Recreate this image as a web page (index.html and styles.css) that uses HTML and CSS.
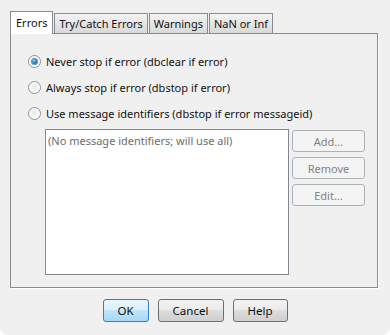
FILE: index.html
```html
<!DOCTYPE html>
<html>
<head>
<meta charset="utf-8">
<link rel="stylesheet" href="styles.css">
</head>
<body>
<div class="window">
  <div class="tabs">
    <div class="tab tab-active">Errors</div>
    <div class="tab">Try/Catch Errors</div>
    <div class="tab">Warnings</div>
    <div class="tab">NaN or Inf</div>
  </div>
  <div class="panel">
    <label class="radio-row"><span class="radio radio-on"></span><span class="label">Never stop if error (dbclear if error)</span></label>
    <label class="radio-row"><span class="radio"></span><span class="label">Always stop if error (dbstop if error)</span></label>
    <label class="radio-row"><span class="radio"></span><span class="label">Use message identifiers (dbstop if error messageid)</span></label>
    <div class="ids">
      <div class="listbox"><span class="placeholder">(No message identifiers; will use all)</span></div>
      <div class="side-buttons">
        <div class="btn btn-disabled">Add...</div>
        <div class="btn btn-disabled">Remove</div>
        <div class="btn btn-disabled">Edit...</div>
      </div>
    </div>
  </div>
  <div class="footer">
    <div class="btn btn-default btn-ok">OK</div>
    <div class="btn btn-cancel">Cancel</div>
    <div class="btn btn-help">Help</div>
  </div>
</div>
</body>
</html>
```

FILE: styles.css
```css
html, body {
  margin: 0;
  padding: 0;
  background: #ffffff;
}
body {
  font-family: "Noto Sans", "Open Sans", sans-serif;
  font-size: 11px;
  color: #111111;
}
.window {
  width: 390px;
  height: 335px;
  box-sizing: border-box;
  background: #f0f0f0;
  border-radius: 0 0 8px 8px;
  padding: 11px 12px 0 10px;
  display: flex;
  flex-direction: column;
}
.tabs {
  display: flex;
  align-items: flex-end;
  height: 22px;
  position: relative;
  z-index: 1;
}
.tab {
  box-sizing: border-box;
  height: 20px;
  padding: 0 4px;
  border: 1px solid #898c95;
  border-bottom: none;
  background: linear-gradient(#f3f3f3, #e6e6e6 50%, #d9d9d9);
  line-height: 19px;
  margin-right: 1px;
  white-space: nowrap;
}
.tab-active {
  height: 23px;
  margin-bottom: -1px;
  background: #ffffff;
  padding: 0 5px;
  line-height: 21px;
}
.panel {
  box-sizing: border-box;
  width: 368px;
  height: 255px;
  border: 1px solid #898c95;
  box-shadow: 1px 1px 0 #ffffff;
  background: #f0f0f0;
  padding: 19px 0 0 16px;
  display: flex;
  flex-direction: column;
  gap: 10px;
}
.radio-row {
  display: flex;
  align-items: center;
  height: 16px;
  gap: 5px;
}
.radio {
  box-sizing: border-box;
  width: 13px;
  height: 13px;
  border-radius: 50%;
  border: 1px solid #8e8f8f;
  background: radial-gradient(circle at 50% 45%, #e6e6e6 0, #f4f4f4 40%, #ffffff 70%);
  display: flex;
  align-items: center;
  justify-content: center;
  margin-left: 1px;
}
.radio-on::after {
  content: "";
  width: 5px;
  height: 5px;
  border-radius: 50%;
  background: radial-gradient(circle at 40% 35%, #8fd0f5 0, #2a86c8 45%, #0e3e72 100%);
  box-shadow: 0 0 0 1px #5a8fc0;
}
.label {
  white-space: nowrap;
}
.ids {
  display: flex;
  align-items: flex-start;
  gap: 3px;
  margin-top: -2px;
  margin-left: 18px;
}
.listbox {
  box-sizing: border-box;
  width: 244px;
  height: 146px;
  border: 1px solid #828790;
  background: #ffffff;
  padding: 3px 0 0 2px;
}
.placeholder {
  color: #6d6d6d;
  white-space: nowrap;
}
.side-buttons {
  display: flex;
  flex-direction: column;
  gap: 5px;
  padding-top: 1px;
}
.btn {
  box-sizing: border-box;
  height: 22px;
  border: 1px solid #707070;
  border-radius: 3px;
  background: linear-gradient(#f2f2f2 0, #ebebeb 50%, #dddddd 50%, #cfcfcf 100%);
  display: flex;
  align-items: center;
  justify-content: center;
  color: #111111;
  white-space: nowrap;
}
.side-buttons .btn {
  width: 73px;
}
.btn-disabled {
  border-color: #adb2b5;
  background: #f4f4f4;
  color: #838383;
}
.footer {
  display: flex;
  justify-content: center;
  gap: 9px;
  margin-top: 11px;
  padding-left: 2px;
}
.footer .btn {
  height: 23px;
  font-size: 11.5px;
}
.btn-default {
  border-color: #3c7fb1;
  background: linear-gradient(#eaf6fd 0, #d9f0fc 50%, #bee6fd 50%, #a7d9f5 100%);
}
.btn-ok { width: 46px; }
.btn-cancel { width: 66px; }
.btn-help { width: 55px; }
```
